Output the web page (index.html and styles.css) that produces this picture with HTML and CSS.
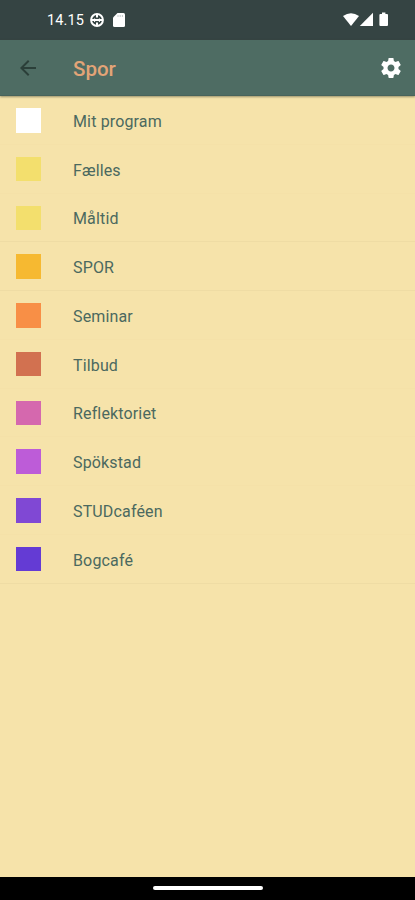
FILE: index.html
```html
<!DOCTYPE html>
<html lang="da">
<head>
<meta charset="utf-8">
<title>Spor</title>
<link rel="stylesheet" href="styles.css">
</head>
<body>
<div class="screen">
  <div class="status">
    <span class="time">14.15</span>
    <svg class="app" viewBox="0 0 16 16"><circle cx="8" cy="8" r="5.9" fill="none" stroke="#fff" stroke-width="2"/><path d="M2 8h12M8 2v3.5M8 10.5V14" stroke="#fff" stroke-width="2"/><path d="M5.6 8V6.4M10.4 8V6.4M5.6 8v2M10.4 8v2" stroke="#fff" stroke-width="1"/></svg>
    <svg class="card" viewBox="0 0 12 14"><path d="M4.5 0H10.5Q12 0 12 1.5V12.5Q12 14 10.5 14H1.5Q0 14 0 12.5V4.5Z" fill="#fff"/><path d="M5 2v2M7.2 2v2M9.4 2v2" stroke="#b4bdbb" stroke-width=".8"/></svg>
    <svg class="signals" viewBox="0 0 46 16"><path d="M0 4.1Q8 -1.7 16 4.1L8 14Z" fill="#fff"/><path d="M16.8 14L30 .8V14Z" fill="#fff"/><path d="M39 .5h3.4V2H44q1 0 1 1v10q0 1-1 1h-6.6q-1 0-1-1V3q0-1 1-1H39Z" fill="#fff"/></svg>
  </div>
  <header class="bar">
    <svg class="back" viewBox="0 0 24 24"><path d="M20 11H7.83l5.59-5.59L12 4l-8 8 8 8 1.41-1.41L7.83 13H20v-2z"/></svg>
    <h1>Spor</h1>
    <svg class="gear" viewBox="0 0 24 24"><path d="M19.43 12.98c.04-.32.07-.64.07-.98s-.03-.66-.07-.98l2.11-1.65c.19-.15.24-.42.12-.64l-2-3.46c-.12-.22-.39-.3-.61-.22l-2.49 1c-.52-.4-1.08-.73-1.69-.98l-.38-2.65C14.46 2.18 14.25 2 14 2h-4c-.25 0-.46.18-.49.42l-.38 2.65c-.61.25-1.17.59-1.69.98l-2.49-1c-.23-.09-.49 0-.61.22l-2 3.46c-.13.22-.07.49.12.64l2.11 1.65c-.04.32-.07.65-.07.98s.03.66.07.98l-2.11 1.65c-.19.15-.24.42-.12.64l2 3.46c.12.22.39.3.61.22l2.49-1c.52.4 1.08.73 1.69.98l.38 2.65c.03.24.24.42.49.42h4c.25 0 .46-.18.49-.42l.38-2.65c.61-.25 1.17-.59 1.69-.98l2.49 1c.23.09.49 0 .61-.22l2-3.46c.12-.22.07-.49-.12-.64l-2.11-1.65zM12 15.5c-1.93 0-3.5-1.57-3.5-3.5s1.57-3.5 3.5-3.5 3.5 1.57 3.5 3.5-1.57 3.5-3.5 3.5z"/></svg>
  </header>
  <ul class="tracks">
    <li><i class="swatch white"></i>Mit program</li>
    <li><i class="swatch yellow"></i>Fælles</li>
    <li class="lined"><i class="swatch yellow"></i>Måltid</li>
    <li class="lined"><i class="swatch amber"></i>SPOR</li>
    <li><i class="swatch orange"></i>Seminar</li>
    <li><i class="swatch rust"></i>Tilbud</li>
    <li><i class="swatch pink"></i>Reflektoriet</li>
    <li><i class="swatch orchid"></i>Spökstad</li>
    <li><i class="swatch violet"></i>STUDcaféen</li>
    <li class="lined"><i class="swatch indigo"></i>Bogcafé</li>
  </ul>
  <div class="nav"><span class="handle"></span></div>
</div>
</body>
</html>
```
FILE: styles.css
```css
* { box-sizing: border-box; }
body { margin: 0; font-family: Roboto, "Liberation Sans", sans-serif; }
.screen { height: 900px; display: flex; flex-direction: column; background: #f6e3aa; overflow: hidden; }
.status { height: 40px; flex: none; display: flex; align-items: center; padding: 0 26px 0 47px; background: #354443; color: #fff; }
.time { width: 42px; padding-top: 1px; font-size: 14.5px; font-weight: 400; letter-spacing: .15px; }
.app { width: 16px; height: 16px; }
.card { width: 12px; height: 14px; margin-left: 8px; }
.signals { width: 46px; height: 16px; margin-left: auto; }
.bar { height: 56px; flex: none; display: flex; align-items: center; padding: 0 12px 0 16px; background: #4e6c63; border-bottom: 1px solid #48635b; box-shadow: 0 1px 2px rgba(60, 65, 45, .5); }
.back { width: 24px; height: 24px; fill: #2b3f39; }
h1 { margin: 3px 0 0 33px; font-size: 20.5px; line-height: 24px; font-weight: 500; color: #e3a477; }
.gear { width: 24px; height: 24px; margin: 1px 0 0 auto; fill: #fff; }
.tracks { flex: 1; margin: 0; padding: 0; list-style: none; }
li { height: 48.75px; display: flex; align-items: center; padding: 3.2px 0 0 16.4px; border-bottom: 1px solid #f5e1a8; font-size: 16px; letter-spacing: .15px; color: #4b695f; }
.lined { border-bottom-color: #efdca4; }
.swatch { width: 24.6px; height: 24.5px; margin: -2.2px 32px 0 0; }
.white { background: #fff; }
.yellow { background: #f3df6d; }
.amber { background: #f6b931; }
.orange { background: #f88f46; }
.rust { background: #d27150; }
.pink { background: #d568ae; }
.orchid { background: #bd5cd8; }
.violet { background: #8048d4; }
.indigo { background: #643bd4; }
.nav { height: 23px; flex: none; display: flex; justify-content: center; padding-top: 9px; background: #000; }
.handle { width: 110px; height: 4px; border-radius: 2px; background: #fff; }
```
